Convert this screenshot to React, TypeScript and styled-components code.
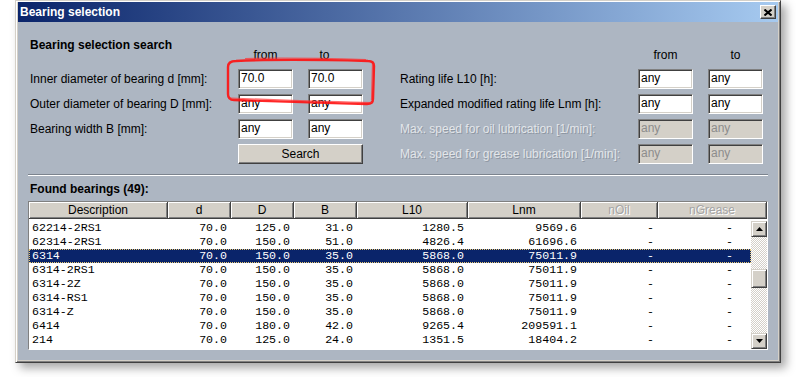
import { Fragment } from "react";
import styled, { createGlobalStyle } from "styled-components";

const GlobalStyle = createGlobalStyle`
  html, body {
    margin: 0;
    padding: 0;
    background: #ffffff;
  }
  body {
    font-family: "Liberation Sans", Arial, sans-serif;
    font-size: 12px;
    color: #000;
  }
`;

const Page = styled.div`
  position: relative;
  width: 796px;
  height: 377px;
  padding-left: 15px;
  box-sizing: border-box;
  overflow: hidden;
`;

const Window = styled.div`
  width: 766px;
  height: 363px;
  box-sizing: border-box;
  display: flex;
  flex-direction: column;
  padding: 1px 2px 2px 2px;
  background: #d4d0c8;
  border: 1px solid;
  border-color: #d4d0c8 #404040 #404040 #d4d0c8;
  box-shadow: inset 1px 1px 0 #ffffff, inset -1px -1px 0 #808080,
    5px 5px 9px rgba(0, 0, 0, 0.35);
`;

const TitleBar = styled.div`
  flex: none;
  height: 20px;
  display: flex;
  align-items: center;
  justify-content: space-between;
  padding: 0 2px;
  background: linear-gradient(to right, #0a246a, #a6caf0);
`;

const TitleText = styled.span`
  color: #ffffff;
  font-weight: bold;
  font-size: 12px;
`;

const CloseButton = styled.div`
  width: 16px;
  height: 14px;
  box-sizing: border-box;
  display: flex;
  align-items: center;
  justify-content: center;
  background: #d4d0c8;
  border: 1px solid;
  border-color: #ffffff #404040 #404040 #ffffff;
  box-shadow: inset -1px -1px 0 #808080;
`;

const Content = styled.div`
  flex: 1;
  background: #adb6c2;
  padding: 16px 10px 10px 10px;
`;

const SearchArea = styled.div`
  display: flex;
  gap: 37px;
  padding-left: 2px;
`;

const FieldGrid = styled.div<{ $labelWidth: number }>`
  display: grid;
  grid-template-columns: ${(p) => p.$labelWidth}px 55px 55px;
  grid-template-rows: 26px repeat(4, 20px);
  column-gap: 15px;
  row-gap: 5px;
`;

const SectionTitle = styled.div`
  align-self: start;
  font-weight: bold;
  line-height: 14px;
  white-space: nowrap;
`;

const ColumnHead = styled.div<{ $shift?: number }>`
  align-self: end;
  text-align: center;
  line-height: 14px;
  padding-bottom: 2px;
  padding-right: ${(p) => p.$shift ?? 0}px;
`;

const Label = styled.div<{ $disabled?: boolean }>`
  align-self: center;
  white-space: nowrap;
  line-height: 14px;
  color: ${(p) => (p.$disabled ? "#e3e6ea" : "#000")};
  text-shadow: ${(p) => (p.$disabled ? "1px 1px 0 #8e97a2" : "none")};
`;

const Field = styled.div<{ $disabled?: boolean }>`
  width: 55px;
  height: 20px;
  box-sizing: border-box;
  padding: 0 2px;
  line-height: 17px;
  background: ${(p) => (p.$disabled ? "#d4d0c8" : "#ffffff")};
  color: ${(p) => (p.$disabled ? "#8c8c8c" : "#000")};
  border: 1px solid;
  border-color: #808080 #ffffff #ffffff #808080;
  box-shadow: inset 1px 1px 0 #404040, inset -1px -1px 0 #d4d0c8;
  overflow: hidden;
`;

const SearchButton = styled.div`
  grid-column: 2 / 4;
  height: 20px;
  box-sizing: border-box;
  display: flex;
  align-items: center;
  justify-content: center;
  background: #d4d0c8;
  border: 1px solid;
  border-color: #ffffff #404040 #404040 #ffffff;
  box-shadow: inset -1px -1px 0 #808080;
`;

const Separator = styled.div`
  margin-top: 10px;
  border-top: 1px solid #7c848e;
  border-bottom: 1px solid #ffffff;
`;

const FoundTitle = styled.div`
  margin-top: 6px;
  padding-left: 2px;
  font-weight: bold;
  line-height: 14px;
`;

const TableFrame = styled.div`
  margin-top: 5px;
  border: 1px solid;
  border-color: #808080 #ffffff #ffffff #808080;
`;

const COLS = [139, 63, 63, 63, 111, 113, 77];

const HeaderRow = styled.div`
  display: grid;
  grid-template-columns: ${COLS.map((c) => c + "px").join(" ")} 109px;
  height: 17px;
`;

const HeaderCell = styled.div<{ $disabled?: boolean }>`
  box-sizing: border-box;
  background: #d4d0c8;
  border-right: 1px solid #404040;
  border-bottom: 1px solid #404040;
  box-shadow: inset 1px 1px 0 #ffffff, inset -1px -1px 0 #808080;
  text-align: center;
  line-height: 16px;
  color: ${(p) => (p.$disabled ? "#a4a4a4" : "#000")};
  text-shadow: ${(p) => (p.$disabled ? "1px 1px 0 #ffffff" : "none")};
`;

const Body = styled.div`
  display: flex;
  height: 130px;
  background: #ffffff;
`;

const Rows = styled.div`
  flex: 1;
  padding-top: 2px;
`;

const Row = styled.div<{ $selected?: boolean }>`
  display: grid;
  grid-template-columns: ${COLS.map((c) => c + "px").join(" ")} 93px;
  height: 14px;
  line-height: 14px;
  font-family: "Liberation Mono", "Courier New", monospace;
  font-size: 11.6px;
  background: ${(p) => (p.$selected ? "#0a246a" : "transparent")};
  color: ${(p) => (p.$selected ? "#ffffff" : "#000")};
  outline: ${(p) => (p.$selected ? "1px dotted #e8c870" : "none")};
  outline-offset: -1px;
`;

const Cell = styled.div<{ $left?: boolean; $padRight?: number }>`
  padding: 0 ${(p) => p.$padRight ?? 4}px 0 3px;
  text-align: ${(p) => (p.$left ? "left" : "right")};
  white-space: nowrap;
  overflow: hidden;
`;

const ScrollBar = styled.div`
  width: 16px;
  display: flex;
  flex-direction: column;
  padding-top: 2px;
`;

const ScrollButton = styled.div`
  flex: none;
  width: 16px;
  height: 16px;
  box-sizing: border-box;
  display: flex;
  align-items: center;
  justify-content: center;
  background: #d4d0c8;
  border: 1px solid;
  border-color: #d4d0c8 #404040 #404040 #d4d0c8;
  box-shadow: inset 1px 1px 0 #ffffff, inset -1px -1px 0 #808080;
`;

const ScrollTrack = styled.div`
  flex: 1;
  padding-top: 32px;
  background: repeating-conic-gradient(#d4d0c8 0 25%, #ffffff 0 50%) 0 0 / 2px 2px;
`;

const ScrollThumb = styled(ScrollButton)`
  height: 19px;
`;

const Annotation = styled.svg`
  position: absolute;
  left: 0;
  top: 0;
  pointer-events: none;
`;

const leftFields = [
  { label: "Inner diameter of bearing d [mm]:", from: "70.0", to: "70.0" },
  { label: "Outer diameter of bearing D [mm]:", from: "any", to: "any" },
  { label: "Bearing width B [mm]:", from: "any", to: "any" },
];

const rightFields = [
  { label: "Rating life L10 [h]:", disabled: false },
  { label: "Expanded modified rating life Lnm [h]:", disabled: false },
  { label: "Max. speed for oil lubrication [1/min]:", disabled: true },
  { label: "Max. speed for grease lubrication [1/min]:", disabled: true },
];

const headers = [
  { name: "Description" },
  { name: "d" },
  { name: "D" },
  { name: "B" },
  { name: "L10" },
  { name: "Lnm" },
  { name: "nOil", disabled: true },
  { name: "nGrease", disabled: true },
];

const bearings = [
  ["62214-2RS1", "70.0", "125.0", "31.0", "1280.5", "9569.6"],
  ["62314-2RS1", "70.0", "150.0", "51.0", "4826.4", "61696.6"],
  ["6314", "70.0", "150.0", "35.0", "5868.0", "75011.9"],
  ["6314-2RS1", "70.0", "150.0", "35.0", "5868.0", "75011.9"],
  ["6314-2Z", "70.0", "150.0", "35.0", "5868.0", "75011.9"],
  ["6314-RS1", "70.0", "150.0", "35.0", "5868.0", "75011.9"],
  ["6314-Z", "70.0", "150.0", "35.0", "5868.0", "75011.9"],
  ["6414", "70.0", "180.0", "42.0", "9265.4", "209591.1"],
  ["214", "70.0", "125.0", "24.0", "1351.5", "18404.2"],
];

export default function App() {
  return (
    <Page>
      <GlobalStyle />
      <Window>
        <TitleBar>
          <TitleText>Bearing selection</TitleText>
          <CloseButton>
            <svg width="8" height="7" viewBox="0 0 8 7">
              <path d="M0.5 0.5 L7.5 6.5 M7.5 0.5 L0.5 6.5" stroke="#000" strokeWidth="2" />
            </svg>
          </CloseButton>
        </TitleBar>

        <Content>
          <SearchArea>
            <FieldGrid $labelWidth={193}>
              <SectionTitle>Bearing selection search</SectionTitle>
              <ColumnHead>from</ColumnHead>
              <ColumnHead $shift={22}>to</ColumnHead>
              {leftFields.map((f) => (
                <Fragment key={f.label}>
                  <Label>{f.label}</Label>
                  <Field>{f.from}</Field>
                  <Field>{f.to}</Field>
                </Fragment>
              ))}
              <div />
              <SearchButton>Search</SearchButton>
            </FieldGrid>

            <FieldGrid $labelWidth={223}>
              <div />
              <ColumnHead>from</ColumnHead>
              <ColumnHead>to</ColumnHead>
              {rightFields.map((f) => (
                <Fragment key={f.label}>
                  <Label $disabled={f.disabled}>{f.label}</Label>
                  <Field $disabled={f.disabled}>any</Field>
                  <Field $disabled={f.disabled}>any</Field>
                </Fragment>
              ))}
            </FieldGrid>
          </SearchArea>

          <Separator />
          <FoundTitle>Found bearings (49):</FoundTitle>

          <TableFrame>
            <HeaderRow>
              {headers.map((h) => (
                <HeaderCell key={h.name} $disabled={h.disabled}>{h.name}</HeaderCell>
              ))}
            </HeaderRow>
            <Body>
              <Rows>
                {bearings.map((b) => (
                  <Row key={b[0]} $selected={b[0] === "6314"}>
                    <Cell $left>{b[0]}</Cell>
                    {b.slice(1).map((v, i) => (
                      <Cell key={i}>{v}</Cell>
                    ))}
                    <Cell>-</Cell>
                    <Cell $padRight={18}>-</Cell>
                  </Row>
                ))}
              </Rows>
              <ScrollBar>
                <ScrollButton>
                  <svg width="7" height="4" viewBox="0 0 7 4">
                    <path d="M3.5 0 L7 4 L0 4 Z" fill="#000" />
                  </svg>
                </ScrollButton>
                <ScrollTrack>
                  <ScrollThumb />
                </ScrollTrack>
                <ScrollButton>
                  <svg width="7" height="4" viewBox="0 0 7 4">
                    <path d="M0 0 L7 0 L3.5 4 Z" fill="#000" />
                  </svg>
                </ScrollButton>
              </ScrollBar>
            </Body>
          </TableFrame>
        </Content>
      </Window>

      <Annotation width="796" height="377" viewBox="0 0 796 377">
        <path
          d="M236 61 C280 59 330 60 368 61 Q374 61 374 66 L373 99 Q373 104 367 104 C320 103 270 101 234 100 Q228 100 228 94 L228 67 Q228 61 236 61 Z"
          fill="none"
          stroke="#ff1010"
          strokeWidth="2.4"
          opacity="0.9"
        />
        <path
          d="M245 58.5 C290 57.5 330 58.5 366 59.5 M230 98 C280 100 330 102 372 102.5 M372.5 64 L371.5 100"
          fill="none"
          stroke="#ff3030"
          strokeWidth="1.2"
          opacity="0.7"
        />
      </Annotation>
    </Page>
  );
}
